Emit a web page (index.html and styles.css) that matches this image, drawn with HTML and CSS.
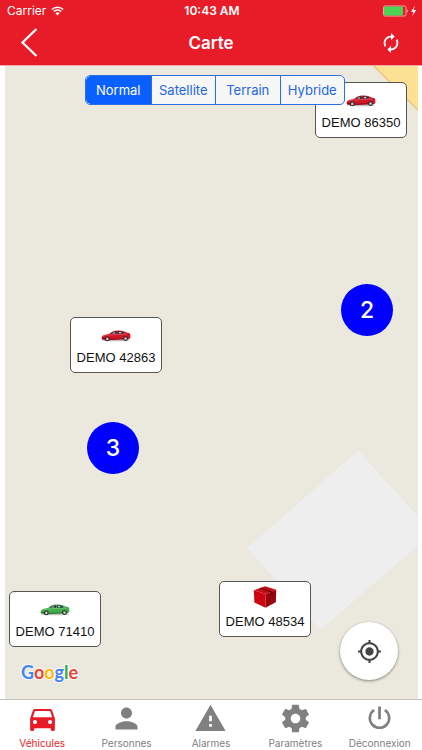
FILE: index.html
```html
<!DOCTYPE html>
<html lang="fr">
<head>
<meta charset="utf-8">
<meta name="viewport" content="width=device-width, initial-scale=1">
<title>Carte</title>
<link rel="stylesheet" href="styles.css">
</head>
<body>
<svg class="defs" aria-hidden="true">
  <symbol id="car" viewBox="0 0 30 12">
    <ellipse cx="15" cy="10.2" rx="14" ry="1" fill="#000" opacity=".25"/>
    <path d="M.6 8.600C.4 6.400 1.600 5.300 4 4.700 5.800 4.200 7.200 4 8.300 3.700 10.400 1.700 12.800.7 16.500.5 20.500.3 23 1 25.500 2.600c1.700.2 3 .5 3.400 1.100.5 1 .6 2.800.4 4.400l-1.500 1.100L7 10.200 1.400 9.700z" fill="currentColor"/>
    <path d="M9.600 3.800C11.600 2 13.500 1.400 16 1.300l.2 2.500zM17 1.300c2.600-.2 4.700.3 6.400 1.500l-1 1-5.100.1z" fill="#303a40"/>
    <path d="M11 3.500l2.500-1.600.6 1.500zM18 1.900l2.500.2-.5 1.200-1.800.1z" fill="#c5d0d4"/>
    <path d="M2 6.300l3-1.100 8-.5 13-.6" fill="none" stroke="#fff" stroke-opacity=".35" stroke-width=".6"/>
    <path d="M1 8.300l3 .6M9 9.300l13-.5" stroke="#000" stroke-opacity=".45" stroke-width=".8"/>
    <circle cx="6.300" cy="8.900" r="2.400" fill="#222"/><circle cx="6.300" cy="8.900" r="1.300" fill="#ccc"/>
    <circle cx="24.500" cy="8.600" r="2.400" fill="#222"/><circle cx="24.500" cy="8.600" r="1.300" fill="#ccc"/>
  </symbol>
</svg>

<header class="header">
  <div class="status">
    <span class="carrier">Carrier
      <svg width="13" height="10" viewBox="0 0 13 10" fill="none" stroke="#fff" stroke-width="1.500"><path d="M.8 3.500a8.200 8.200 0 0 1 11.400 0M2.800 5.600a5.300 5.300 0 0 1 7.400 0"/><path d="M6.500 9.500L4.400 7.300a3 3 0 0 1 4.200 0z" fill="#fff" stroke="none"/></svg>
    </span>
    <span class="clock">10:43 AM</span>
    <svg class="battery" width="34" height="12" viewBox="0 0 34 12"><rect x=".5" y="1" width="22.500" height="10" rx="1.500" fill="none" stroke="#f5a3a5"/><rect x="1" y="1.500" width="19" height="9" rx="1" fill="#4bd355"/><path d="M24 4.200q1.500 1.800 0 3.600z" fill="#fff"/><path d="M31.800 1L28 6.700h2.400L29.200 11l4-6h-2.500z" fill="#fff"/></svg>
  </div>
  <div class="nav">
    <button class="nav-button" type="button" aria-label="Retour"><svg width="18" height="30" viewBox="0 0 18 30" fill="none" stroke="#fff" stroke-width="2.300"><path d="M16.500 1L2.500 14.500l14 13.500"/></svg></button>
    <h1 class="title">Carte</h1>
    <button class="nav-button nav-button-end" type="button" aria-label="Actualiser"><svg width="22" height="22" viewBox="0 0 24 24" fill="#fff"><path d="M12 6v3l4-4-4-4v3c-4.420 0-8 3.580-8 8 0 1.570.46 3.030 1.240 4.260L6.700 14.800c-.45-.83-.7-1.790-.7-2.800 0-3.310 2.690-6 6-6zm6.760 1.740L17.300 9.200c.44.840.7 1.790.7 2.800 0 3.310-2.690 6-6 6v-3l-4 4 4 4v-3c4.420 0 8-3.580 8-8 0-1.570-.46-3.030-1.240-4.260z"/></svg></button>
  </div>
</header>

<main class="map">
  <svg class="terrain" viewBox="0 0 413 633" preserveAspectRatio="none" aria-hidden="true">
    <path d="M369 0h44v44z" fill="#fde293"/><path d="M369 0l44 44" stroke="#eccb8c" stroke-width="2"/>
    <path d="M353 384l60 66v30l-98 84.500L242 482z" fill="#eee" stroke="#e8e8e4"/>
  </svg>

  <button type="button" class="marker marker-86350"><svg class="car red" width="30" height="12"><use href="#car"/></svg>DEMO 86350</button>
  <button type="button" class="marker marker-42863"><svg class="car red" width="30" height="12"><use href="#car"/></svg>DEMO 42863</button>
  <button type="button" class="marker marker-71410"><svg class="car green" width="30" height="12"><use href="#car"/></svg>DEMO 71410</button>
  <button type="button" class="marker marker-48534"><svg class="box" width="24" height="22" viewBox="0 0 24 22"><path d="M12 .3L23.300 3.800 12.500 8 .8 4.300z" fill="#c90d16"/><path d="M.8 4.300L12.500 8v13.700L1.400 16.500z" fill="#cf0410"/><path d="M23.300 3.800L12.500 8v13.700l10.300-5.500z" fill="#98040c"/><path d="M6 2.300l11.500 3.900v3.600l1.800-.9V5.400L7.800 1.700z" fill="#650309"/></svg>DEMO 48534</button>

  <button type="button" class="cluster cluster-east">2</button>
  <button type="button" class="cluster cluster-west">3</button>

  <fieldset class="segments">
    <label><input type="radio" name="type" checked><span>Normal</span></label>
    <label><input type="radio" name="type"><span>Satellite</span></label>
    <label><input type="radio" name="type"><span>Terrain</span></label>
    <label><input type="radio" name="type"><span>Hybride</span></label>
  </fieldset>

  <div class="google"><span class="g-blue">G</span><span class="g-red">o</span><span class="g-yellow">o</span><span class="g-blue">g</span><span class="g-green">l</span><span class="g-red">e</span></div>

  <button type="button" class="locate" aria-label="Ma position"><svg width="25" height="25" viewBox="0 0 24 24" fill="#444"><path d="M12 8c-2.210 0-4 1.790-4 4s1.790 4 4 4 4-1.790 4-4-1.790-4-4-4zm8.940 3c-.46-4.170-3.770-7.480-7.940-7.940V1h-2v2.060C6.830 3.520 3.520 6.830 3.060 11H1v2h2.060c.46 4.170 3.770 7.480 7.940 7.940V23h2v-2.060c4.170-.46 7.480-3.770 7.940-7.940H23v-2h-2.060zM12 19c-3.870 0-7-3.130-7-7s3.130-7 7-7 7 3.130 7 7-3.130 7-7 7z"/></svg></button>
</main>

<nav class="tabs">
  <a class="tab active" href="#vehicules"><svg viewBox="0 0 24 24"><path d="M18.920 6.010C18.720 5.420 18.160 5 17.500 5h-11c-.66 0-1.210.42-1.420 1.010L3 12v8c0 .55.45 1 1 1h1c.55 0 1-.45 1-1v-1h12v1c0 .55.45 1 1 1h1c.55 0 1-.45 1-1v-8l-2.080-5.990zM6.500 16c-.83 0-1.500-.67-1.500-1.500S5.670 13 6.500 13s1.500.67 1.500 1.500S7.330 16 6.500 16zm11 0c-.83 0-1.500-.67-1.500-1.500s.67-1.500 1.500-1.500 1.500.67 1.500 1.500-.67 1.500-1.500 1.500zM5 11l1.500-4.500h11L19 11H5z"/></svg>Véhicules</a>
  <a class="tab" href="#personnes"><svg viewBox="0 0 24 24"><path d="M12 12c2.210 0 4-1.790 4-4s-1.790-4-4-4-4 1.790-4 4 1.790 4 4 4zm0 2c-2.670 0-8 1.340-8 4v2h16v-2c0-2.660-5.330-4-8-4z"/></svg>Personnes</a>
  <a class="tab" href="#alarmes"><svg viewBox="0 0 24 24"><path d="M1 21h22L12 2 1 21zm12-3h-2v-2h2v2zm0-4h-2v-4h2v4z"/></svg>Alarmes</a>
  <a class="tab" href="#parametres"><svg viewBox="0 0 24 24"><path d="M19.430 12.980c.04-.32.07-.64.07-.98s-.03-.66-.07-.98l2.110-1.650c.19-.15.24-.42.12-.64l-2-3.460c-.12-.22-.39-.3-.61-.22l-2.490 1c-.52-.4-1.080-.73-1.690-.98l-.38-2.650C14.460 2.180 14.250 2 14 2h-4c-.25 0-.46.18-.49.42l-.38 2.650c-.61.25-1.170.59-1.690.98l-2.490-1c-.23-.09-.49 0-.61.22l-2 3.460c-.13.22-.07.49.12.64l2.110 1.650c-.04.32-.07.65-.07.98s.03.66.07.98l-2.110 1.650c-.19.15-.24.42-.12.64l2 3.460c.12.22.39.3.61.22l2.490-1c.52.4 1.080.73 1.690.98l.38 2.650c.03.24.24.42.49.42h4c.25 0 .46-.18.49-.42l.38-2.650c.61-.25 1.170-.59 1.690-.98l2.490 1c.23.09.49 0 .61-.22l2-3.460c.12-.22.07-.49-.12-.64l-2.110-1.650zM12 15.500c-1.930 0-3.500-1.570-3.500-3.500s1.570-3.500 3.500-3.500 3.500 1.570 3.500 3.500-1.570 3.500-3.500 3.500z"/></svg>Paramètres</a>
  <a class="tab" href="#deconnexion"><svg viewBox="0 0 24 24"><path d="M11 3.200h2v9.300h-2zM16.500 5.100l-1.200 1.500a6.100 6.100 0 1 1-6.600 0L7.500 5.100a8 8 0 1 0 9 0z"/></svg>Déconnexion</a>
</nav>
</body>
</html>
```
FILE: styles.css
```css
* { box-sizing: border-box; }

body {
  margin: 0;
  min-height: 100vh;
  display: flex;
  flex-direction: column;
  background: #fff;
  color: #111;
  font-family: Inter, "Liberation Sans", sans-serif;
}

button {
  padding: 0;
  border: 0;
  background: none;
  color: inherit;
  font: inherit;
}

svg { display: block; }

.defs { position: absolute; width: 0; height: 0; }

/* Header */
.header {
  background: #e81c28;
  color: #fff;
  border-bottom: 1px solid #f0a9a6;
}

.status {
  display: grid;
  grid-template-columns: 1fr auto 1fr;
  align-items: center;
  height: 21px;
  padding: 0 5px 0 7px;
  font-size: 12px;
}

.carrier { display: flex; align-items: center; gap: 5px; }
.clock { font-weight: 600; }
.battery { justify-self: end; }

.nav {
  display: grid;
  grid-template-columns: 1fr auto 1fr;
  align-items: center;
  height: 44px;
  padding: 0 20px;
}

.nav-button { justify-self: start; }
.nav-button-end { justify-self: end; }
.title { margin: 0; font-size: 17px; font-weight: 600; }

/* Map */
.map {
  position: relative;
  flex: 1;
  min-height: 420px;
  margin: 0 4px 0 5px;
  background: #ebe9de;
  overflow: hidden;
}

.terrain { position: absolute; inset: 0; width: 100%; height: 100%; }

.marker {
  position: absolute;
  display: flex;
  flex-direction: column;
  align-items: center;
  justify-content: space-between;
  width: 92px;
  height: 56px;
  padding: 4px 0 6px;
  border: 1px solid #555;
  border-radius: 5px;
  background: #fff;
  font-family: "Liberation Sans", sans-serif;
  font-size: 13px;
  line-height: 16px;
  white-space: nowrap;
}

.marker-86350 { left: 310px; top: 16px; }
.marker-42863 { left: 65px; top: 251px; }
.marker-71410 { left: 4px; top: 525px; }
.marker-48534 { left: 214px; top: 515px; }

.car { margin-top: 8px; }
.red { color: #d01528; }
.green { color: #43ad4a; }

.cluster {
  position: absolute;
  width: 52px;
  height: 52px;
  border-radius: 50%;
  background: #00f;
  color: #fff;
  font-size: 23px;
  font-weight: 500;
}

.cluster-east { left: 336px; top: 218px; }
.cluster-west { left: 82px; top: 356px; }

.segments {
  position: absolute;
  top: 9px;
  left: 80px;
  display: grid;
  grid-template-columns: repeat(4, 1fr);
  width: 260px;
  height: 30px;
  margin: 0;
  padding: 0;
  border: 1px solid #2b6fe0;
  border-radius: 5px;
  background: #f7f7f7;
  color: #1c66e5;
  font-size: 13px;
  overflow: hidden;
}

.segments label { display: grid; }
.segments label + label { border-left: 1px solid #2b6fe0; }
.segments input { position: absolute; opacity: 0; }
.segments span { display: grid; place-items: center; }
.segments input:checked + span { background: #0a60ff; color: #fff; }

.google {
  position: absolute;
  left: 16px;
  bottom: 15px;
  font-family: Lato, sans-serif;
  font-size: 18px;
  font-weight: 700;
  line-height: 24px;
  -webkit-text-stroke: 2px #f8f8f5;
  paint-order: stroke fill;
}

.g-blue { color: #4285f4; }
.g-red { color: #ea4335; }
.g-yellow { color: #fbbc05; }
.g-green { color: #34a853; }

.locate {
  position: absolute;
  right: 20px;
  bottom: 19px;
  display: grid;
  place-items: center;
  width: 58px;
  height: 58px;
  border-radius: 50%;
  background: #fff;
  box-shadow: 0 1px 3px rgba(0, 0, 0, .45);
}

/* Tab bar */
.tabs {
  display: grid;
  grid-template-columns: repeat(5, 1fr);
  height: 51px;
  padding-top: 2px;
  border-top: 1px solid #c4c4c0;
  background: #fff;
}

.tab {
  display: flex;
  flex-direction: column;
  align-items: center;
  color: #808080;
  font-size: 10px;
  line-height: 16px;
  text-decoration: none;
}

.tab svg { width: 33px; height: 33px; fill: currentColor; }
.active { color: #e81c28; }
```
